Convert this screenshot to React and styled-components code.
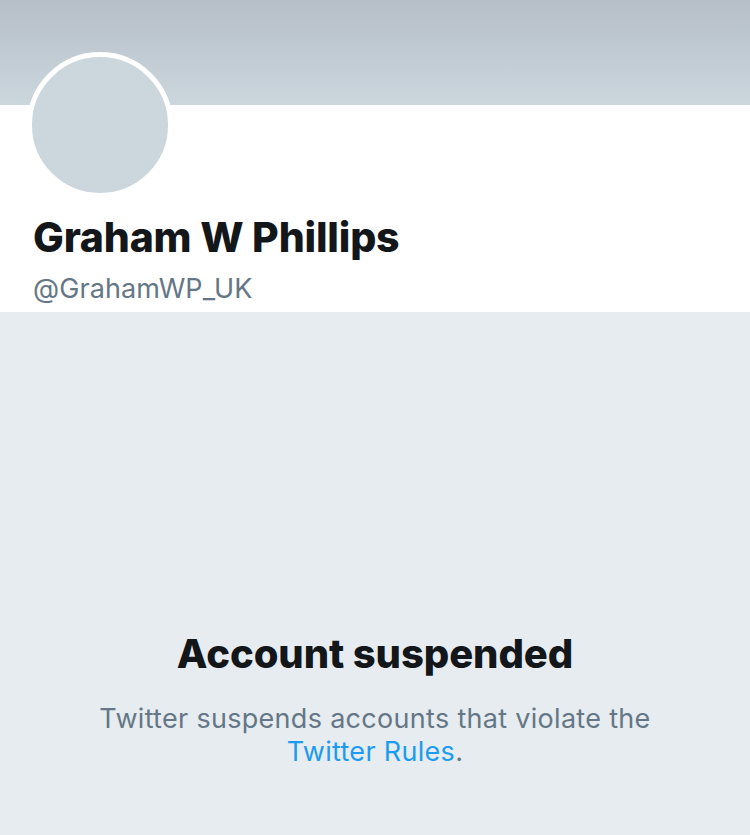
import React from 'react';
import styled, { createGlobalStyle } from 'styled-components';

const GlobalStyle = createGlobalStyle`
  html, body {
    margin: 0;
    padding: 0;
    background: #e6ecf0;
  }
  body {
    font-family: Inter, 'Noto Sans', 'Liberation Sans', sans-serif;
    -webkit-font-smoothing: antialiased;
  }
`;

const Page = styled.div`
  width: 750px;
  min-height: 835px;
  display: flex;
  flex-direction: column;
  background: #e6ecf0;
  overflow: hidden;
`;

const Banner = styled.div`
  height: 105px;
  background: linear-gradient(180deg, #b6bfc8 0%, #ccd6dd 100%);
`;

const ProfileHeader = styled.section`
  background: #fff;
  padding: 0 27px 7px;
  display: flex;
  flex-direction: column;
`;

const Avatar = styled.div`
  width: 136px;
  height: 136px;
  margin-top: -53px;
  border: 5.5px solid #fff;
  border-radius: 50%;
  background: #ccd6dd;
`;

const Name = styled.h1`
  margin: 15px 0 0 6px;
  font-size: 41px;
  font-weight: 800;
  line-height: 49px;
  letter-spacing: -0.2px;
  color: #14171a;
`;

const Handle = styled.div`
  margin: 11px 0 0 6px;
  font-size: 27px;
  line-height: 32px;
  letter-spacing: 0.1px;
  color: #657786;
`;

const Notice = styled.section`
  flex: 1;
  display: flex;
  flex-direction: column;
  align-items: center;
  text-align: center;
  padding: 318px 80px 0;
`;

const Title = styled.h2`
  margin: 0;
  font-size: 40px;
  font-weight: 800;
  line-height: 47px;
  letter-spacing: -0.1px;
  color: #14171a;
`;

const Message = styled.p`
  margin: 25px 0 0;
  max-width: 570px;
  font-size: 27px;
  line-height: 33px;
  letter-spacing: 0.3px;
  color: #657786;
`;

const RulesLink = styled.a`
  color: #1d9bf0;
  text-decoration: none;
`;

export default function App() {
  return (
    <Page>
      <GlobalStyle />
      <Banner />
      <ProfileHeader>
        <Avatar />
        <Name>Graham W Phillips</Name>
        <Handle>@GrahamWP_UK</Handle>
      </ProfileHeader>
      <Notice>
        <Title>Account suspended</Title>
        <Message>
          Twitter suspends accounts that violate the <RulesLink href="#">Twitter Rules</RulesLink>.
        </Message>
      </Notice>
    </Page>
  );
}
